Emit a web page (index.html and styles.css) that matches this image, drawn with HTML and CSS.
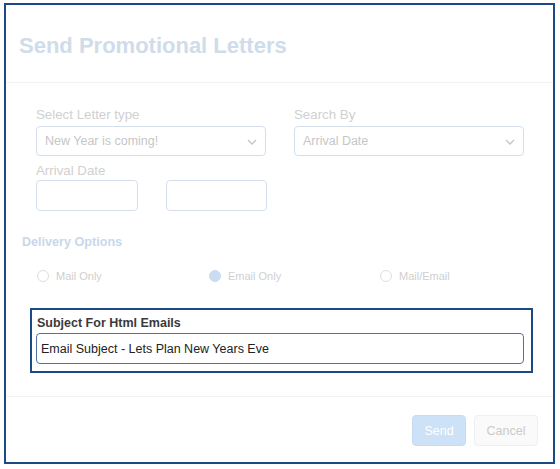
FILE: index.html
```html
<!DOCTYPE html>
<html lang="en">
<head>
<meta charset="utf-8">
<title>Send Promotional Letters</title>
<link rel="stylesheet" href="styles.css">
</head>
<body>
<div class="modal">
  <div class="modal-header">
    <h1 class="title">Send Promotional Letters</h1>
  </div>
  <div class="modal-body">
    <div class="row-two">
      <div class="field">
        <div class="label">Select Letter type</div>
        <div class="select">
          <span>New Year is coming!</span>
          <svg class="chev" width="10" height="6" viewBox="0 0 10 6"><path d="M1 1l4 4 4-4" fill="none" stroke="#c4c4c4" stroke-width="1.3"/></svg>
        </div>
      </div>
      <div class="field">
        <div class="label">Search By</div>
        <div class="select">
          <span>Arrival Date</span>
          <svg class="chev" width="10" height="6" viewBox="0 0 10 6"><path d="M1 1l4 4 4-4" fill="none" stroke="#c4c4c4" stroke-width="1.3"/></svg>
        </div>
      </div>
    </div>
    <div class="label label-date">Arrival Date</div>
    <div class="dates">
      <div class="date date-a"></div>
      <div class="date date-b"></div>
    </div>
    <div class="section-title">Delivery Options</div>
    <div class="radios">
      <div class="radio-item"><span class="radio"></span><span>Mail Only</span></div>
      <div class="radio-item"><span class="radio checked"></span><span>Email Only</span></div>
      <div class="radio-item"><span class="radio"></span><span>Mail/Email</span></div>
    </div>
    <div class="subject-box">
      <div class="subject-label">Subject For Html Emails</div>
      <div class="subject-input">Email Subject - Lets Plan New Years Eve</div>
    </div>
  </div>
  <div class="modal-footer">
    <button class="btn btn-send">Send</button>
    <button class="btn btn-cancel">Cancel</button>
  </div>
</div>
</body>
</html>
```

FILE: styles.css
```css
html, body {
  margin: 0;
  padding: 0;
  background: #ffffff;
}
body {
  padding: 3px 0 0 4px;
  font-family: "Liberation Sans", Arial, Helvetica, sans-serif;
}
.modal {
  width: 551px;
  height: 461px;
  box-sizing: border-box;
  border: 2px solid #1d4a85;
  display: flex;
  flex-direction: column;
  background: #fff;
}
.modal-header {
  padding: 28px 13px 23px 13px;
  border-bottom: 1px solid #f3f3f3;
}
.title {
  margin: 0;
  font-size: 22px;
  line-height: 26px;
  font-weight: bold;
  color: #cfdcea;
}
.modal-body {
  height: 313px;
  box-sizing: border-box;
  padding: 24px 0 0 30px;
}
.row-two {
  display: flex;
  gap: 28px;
}
.field {
  width: 230px;
  display: flex;
  flex-direction: column;
}
.label {
  font-size: 13.3px;
  line-height: 16px;
  color: #d0d0d0;
}
.select {
  margin-top: 3px;
  height: 30px;
  box-sizing: border-box;
  border: 1px solid #d5dfeb;
  border-radius: 4px;
  display: flex;
  align-items: center;
  justify-content: space-between;
  padding: 0 8px 0 8px;
  font-size: 12.5px;
  color: #c6c6c6;
}
.chev {
  margin-top: 1px;
}
.label-date {
  margin-top: 7px;
}
.dates {
  margin-top: 1px;
  display: flex;
  gap: 28px;
}
.date {
  height: 31px;
  box-sizing: border-box;
  border: 1px solid #d5dfeb;
  border-radius: 4px;
}
.date-a { width: 102px; }
.date-b { width: 101px; }
.section-title {
  margin: 23px 0 0 -14px;
  font-size: 12.6px;
  line-height: 16px;
  font-weight: bold;
  color: #c8d8ea;
}
.radios {
  margin-top: 18px;
  display: grid;
  grid-template-columns: 172px 171px 150px;
  font-size: 11px;
  line-height: 16px;
  color: #cfcfcf;
}
.radio-item {
  display: flex;
  align-items: center;
  gap: 7px;
  padding-left: 1px;
}
.radio {
  width: 12px;
  height: 12px;
  box-sizing: border-box;
  border: 1px solid #dedede;
  border-radius: 50%;
  background: #fff;
}
.radio.checked {
  border-color: #c9dcf2;
  background: #c9dcf2;
}
.subject-box {
  margin: 24px 0 0 -6px;
  width: 503px;
  height: 65px;
  box-sizing: border-box;
  border: 2px solid #1d4a85;
  padding: 5px 7px 0 4px;
}
.subject-label {
  font-size: 12.5px;
  line-height: 16px;
  font-weight: bold;
  color: #3a3a3a;
  padding-left: 1px;
}
.subject-input {
  margin-top: 2px;
  height: 31px;
  box-sizing: border-box;
  border: 1px solid #4f73a3;
  border-radius: 4px;
  padding: 0 4px;
  display: flex;
  align-items: center;
  font-size: 12.5px;
  color: #222;
}
.modal-footer {
  border-top: 1px solid #f3f3f3;
  padding: 18px 15px 16px 0;
  display: flex;
  justify-content: flex-end;
  gap: 8px;
}
.btn {
  height: 31px;
  box-sizing: border-box;
  border-radius: 4px;
  font-family: "Liberation Sans", Arial, Helvetica, sans-serif;
  font-size: 12.5px;
  padding: 0;
}
.btn-send {
  width: 54px;
  background: #cde2f6;
  border: 1px solid #c6dcf2;
  color: #ffffff;
}
.btn-cancel {
  width: 64px;
  background: #fafafa;
  border: 1px solid #efefef;
  color: #cacaca;
}
```
